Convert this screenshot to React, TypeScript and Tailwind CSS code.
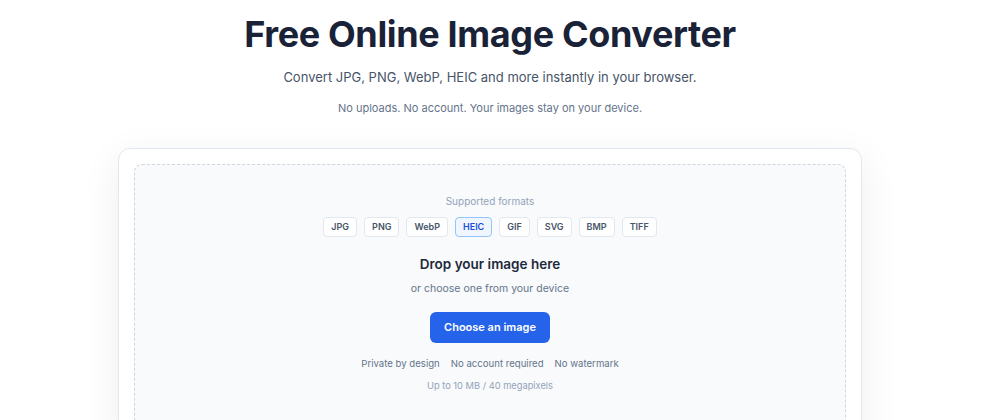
import React from 'react';

const formats = ['JPG', 'PNG', 'WebP', 'HEIC', 'GIF', 'SVG', 'BMP', 'TIFF'];
const perks = ['Private by design', 'No account required', 'No watermark'];

export default function App() {
  return (
    <div className="min-h-screen w-[980px] bg-white font-['Inter',sans-serif] text-[#0f172a]">
      <header className="flex flex-col items-center pt-[14px]">
        <h1 className="text-[36px] font-bold leading-[40px] tracking-[-0.01em] text-[#1a2238]">
          Free Online Image Converter
        </h1>
        <p className="mt-[14px] text-[13px] leading-[18px] text-[#475569]">
          Convert JPG, PNG, WebP, HEIC and more instantly in your browser.
        </p>
        <p className="mt-[14px] text-[11px] leading-4 text-[#64748b]">
          No uploads. No account. Your images stay on your device.
        </p>
      </header>

      <main className="mx-auto mt-[32px] w-[744px] rounded-xl border border-[#e2e8f0] bg-white p-[15px] shadow-[0_10px_40px_rgba(15,23,42,0.07)]">
        <div className="flex flex-col items-center rounded-lg border border-dashed border-[#cfd6e0] bg-[#f8fafc] pb-[40px] pt-[29px]">
          <p className="text-[10px] leading-[14px] text-[#94a3b8]">Supported formats</p>
          <ul className="mt-[9px] flex gap-[7px]">
            {formats.map((f) => (
              <li
                key={f}
                className={
                  f === 'HEIC'
                    ? 'rounded border border-[#93c5fd] bg-[#eff6ff] px-[7px] py-[3px] text-[9px] font-semibold leading-[12px] text-[#1d4ed8]'
                    : 'rounded border border-[#e2e8f0] bg-white px-[7px] py-[3px] text-[9px] font-semibold leading-[12px] text-[#475569]'
                }
              >
                {f}
              </li>
            ))}
          </ul>

          <h2 className="mt-[18px] text-[13.5px] font-semibold leading-[18px] text-[#1e293b]">Drop your image here</h2>
          <p className="mt-[9px] text-[10.5px] leading-[14px] text-[#64748b]">or choose one from your device</p>

          <button className="mt-[16px] h-[31px] w-[120px] rounded-md bg-[#2563eb] text-[11px] font-semibold text-white">
            Choose an image
          </button>

          <div className="mt-[14px] flex gap-[11px] text-[9.6px] leading-[14px] text-[#64748b]">
            {perks.map((p) => (
              <span key={p}>{p}</span>
            ))}
          </div>
          <p className="mt-[9px] text-[9.3px] leading-[12px] text-[#94a3b8]">Up to 10 MB / 40 megapixels</p>
        </div>
      </main>
    </div>
  );
}
